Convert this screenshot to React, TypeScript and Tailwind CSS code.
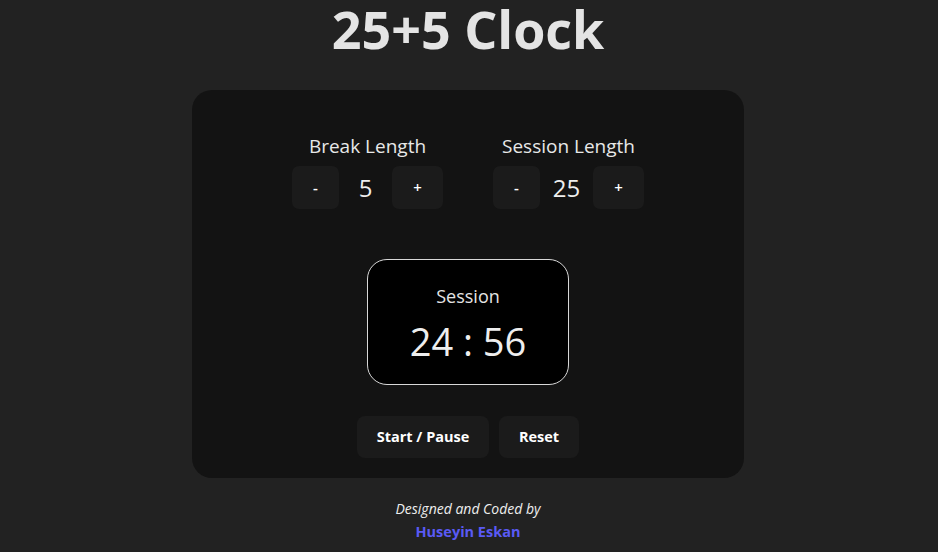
import React from "react";

export default function App() {
  const font = { fontFamily: '"Open Sans", "Noto Sans", sans-serif' };
  return (
    <div className="min-h-[552px] w-full bg-[#222222] text-[#e6e6e6] flex flex-col items-center" style={font}>
      <h1 className="text-[52px] font-bold leading-none mt-[3px] h-[87px] text-[#e4e4e4] mr-[2px]">25+5 Clock</h1>
      <div className="w-[552px] h-[388px] rounded-[20px] bg-[#131313] flex flex-col items-center mr-[2px]">
        <div className="flex gap-[50px] mt-[43px]">
          {[
            { label: "Break Length", value: "5" },
            { label: "Session Length", value: "25" },
          ].map((g) => (
            <div key={g.label} className="flex flex-col items-center w-[151px]">
              <div className="text-[19px] leading-[26px] text-[#e8e8e8]">{g.label}</div>
              <div className="flex items-center mt-[7px]">
                <button className="w-[47px] h-[43px] rounded-[7px] bg-[#1b1b1b] text-white text-[15px] font-semibold">-</button>
                <div className="w-[53px] text-center text-[24px] leading-none text-[#eeeeee]">{g.value}</div>
                <button className="w-[51px] h-[43px] rounded-[7px] bg-[#1b1b1b] text-white text-[15px] font-semibold">+</button>
              </div>
            </div>
          ))}
        </div>
        <div className="mt-[50px] w-[202px] h-[126px] rounded-[20px] bg-black border border-[#d8d8d8] flex flex-col items-center">
          <div className="mt-[24px] text-[18px] leading-[24px] text-[#e4e4e4]">Session</div>
          <div className="mt-[8px] text-[38px] leading-[50px] text-[#eeeeee]">24 : 56</div>
        </div>
        <div className="flex gap-[10px] mt-[31px]">
          <button className="w-[132px] h-[42px] rounded-[8px] bg-[#1b1b1b] text-white text-[14.5px] font-bold">Start / Pause</button>
          <button className="w-[80px] h-[42px] rounded-[8px] bg-[#1b1b1b] text-white text-[14.5px] font-bold">Reset</button>
        </div>
      </div>
      <div className="mt-[22px] text-[14px] italic leading-[18px] text-[#eeeeee] mr-[2px]">Designed and Coded by</div>
      <div className="mt-[4px] text-[14.5px] font-bold leading-[20px] text-[#5a5af5] mr-[2px]">Huseyin Eskan</div>
    </div>
  );
}
